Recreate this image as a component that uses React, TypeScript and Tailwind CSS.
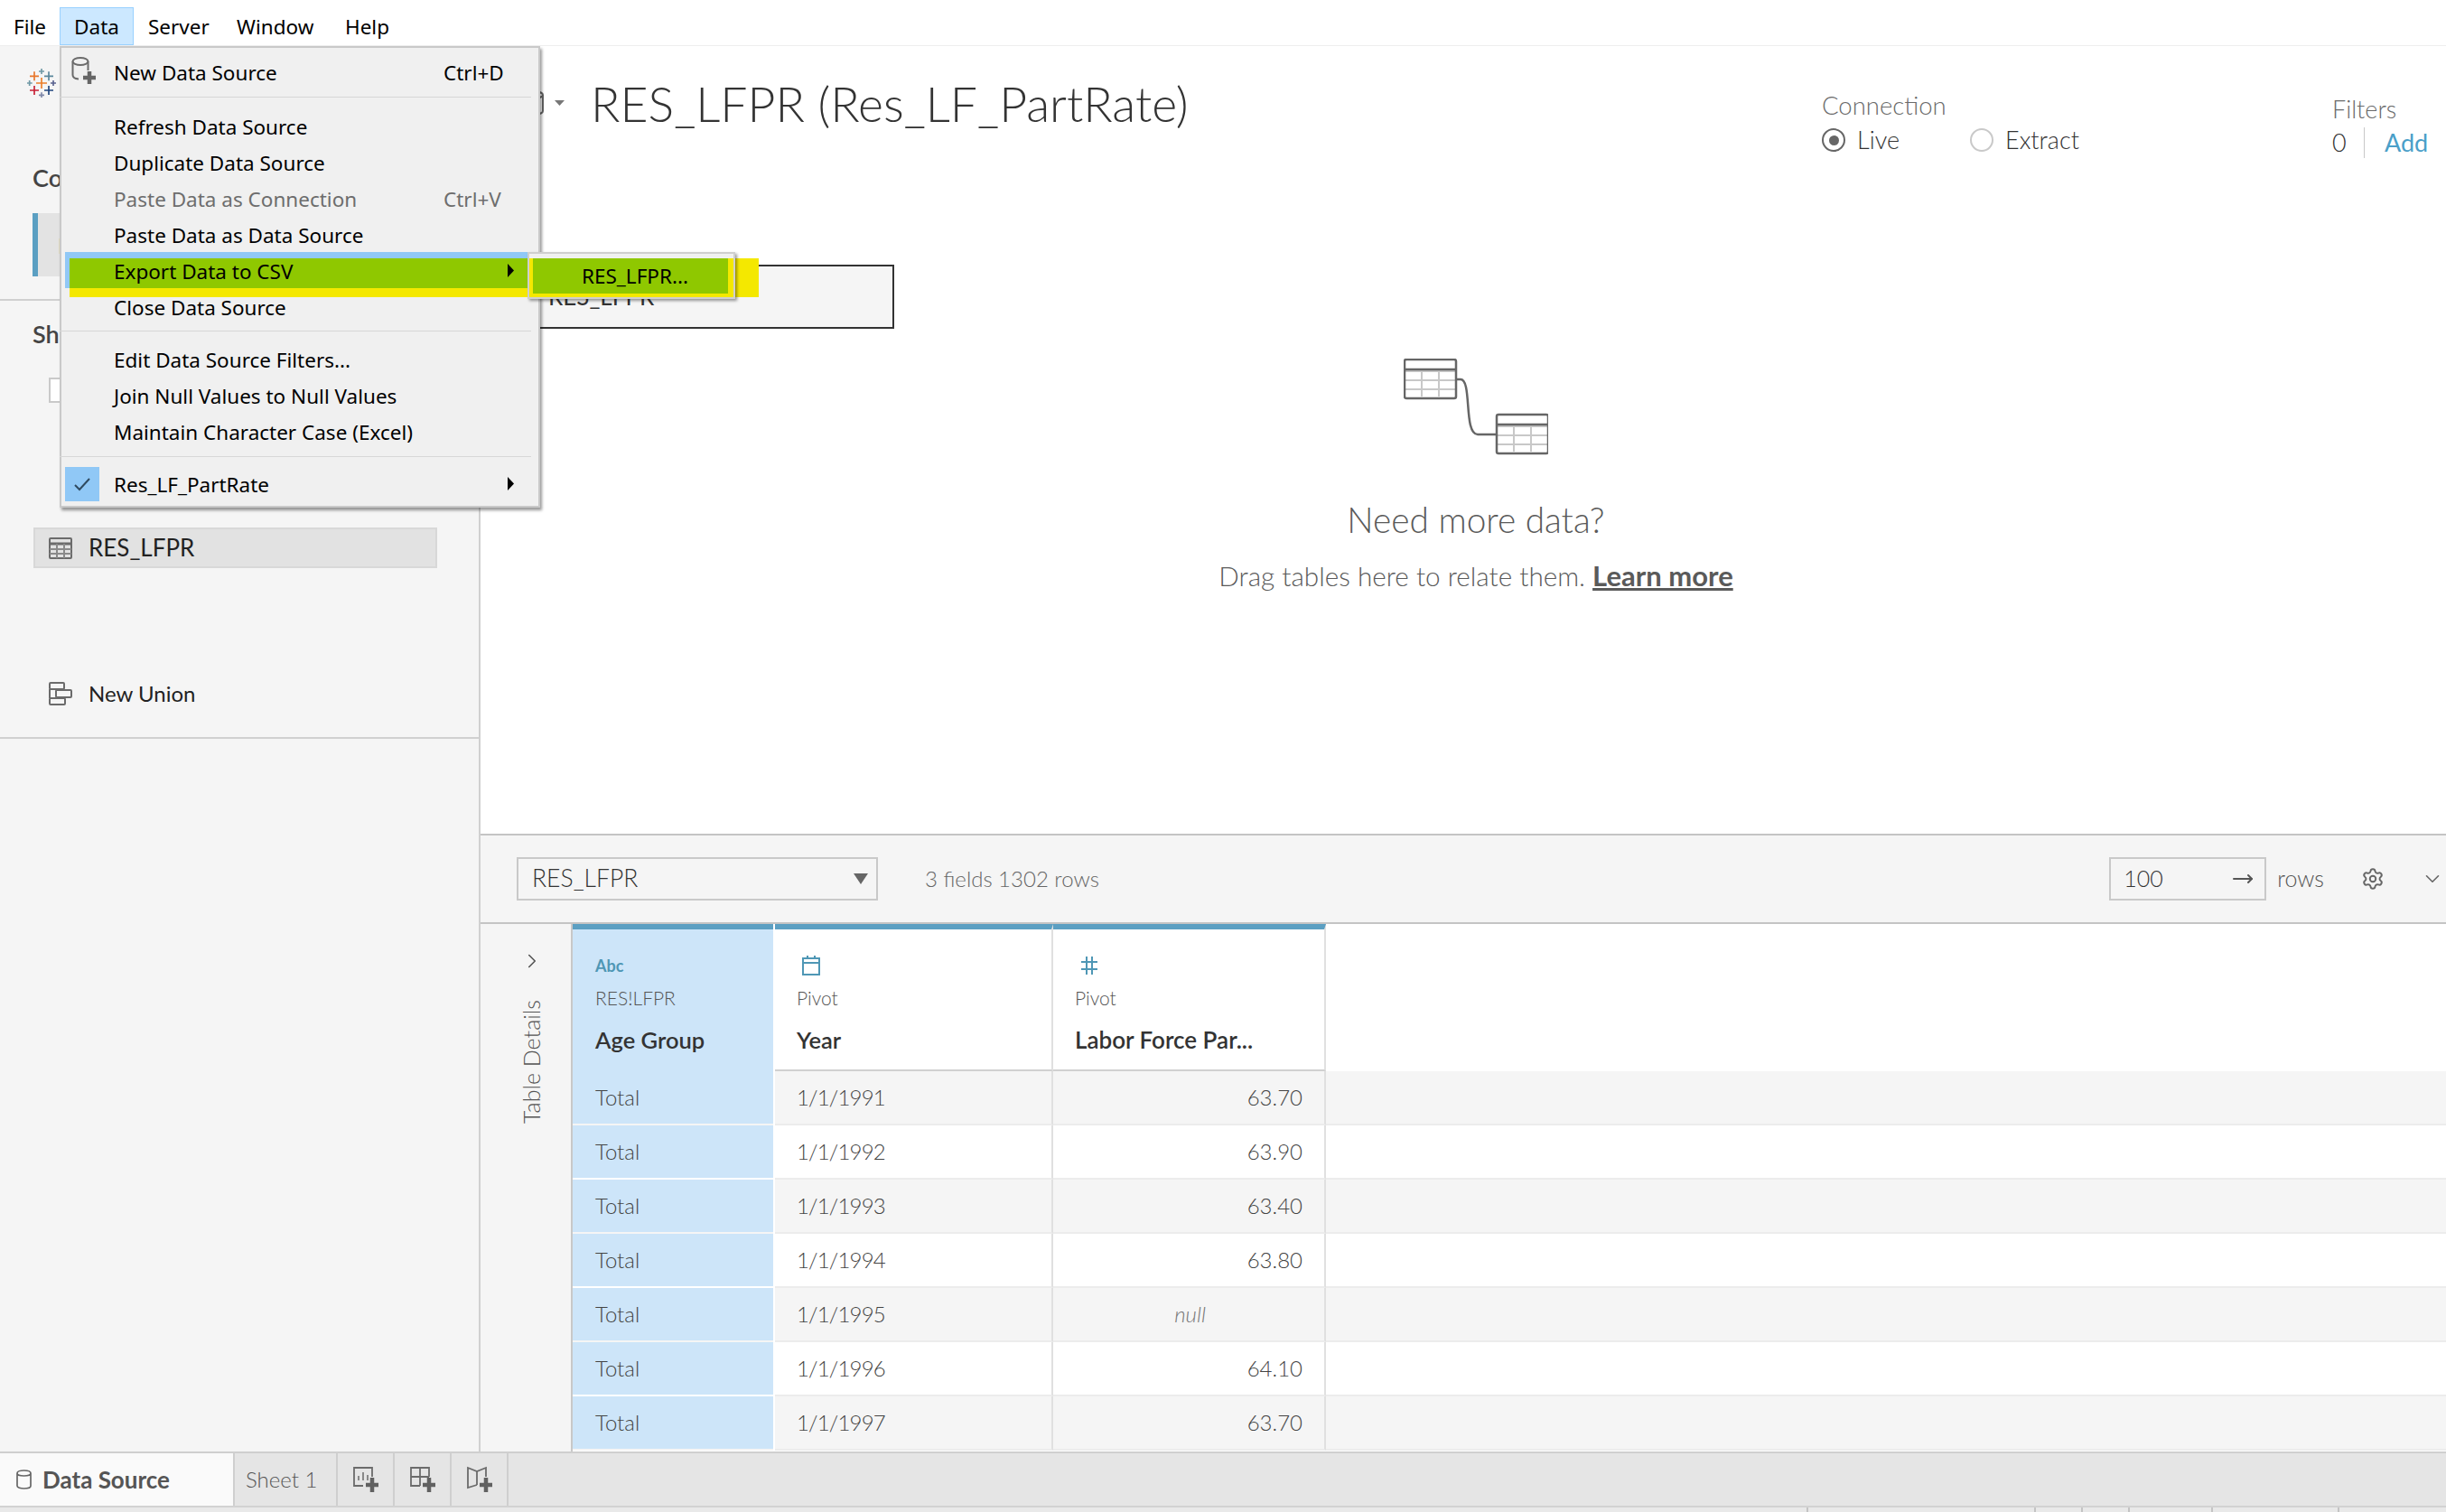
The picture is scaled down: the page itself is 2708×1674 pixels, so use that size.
import React from 'react';
import { ChevronRight, ChevronDown, Settings, MoveRight } from 'lucide-react';

const logoCrosses = [
  { x: 54, y: 87, s: 15, w: 5, c: '#e8762b' },
  { x: 78, y: 71, s: 9, w: 5, c: '#7099a6' },
  { x: 102, y: 87, s: 15, w: 5, c: '#5b879b' },
  { x: 38, y: 110, s: 9, w: 5, c: '#7099a6' },
  { x: 78, y: 110, s: 18, w: 5, c: '#eb7f2b' },
  { x: 117, y: 110, s: 9, w: 5, c: '#59628f' },
  { x: 54, y: 134, s: 15, w: 5, c: '#c72035' },
  { x: 102, y: 134, s: 15, w: 5, c: '#1f447e' },
  { x: 78, y: 150, s: 9, w: 5, c: '#7e87a8' },
];

const TableauLogo = () => (
  <svg width="32" height="32" viewBox="30 62 96 96">
    {logoCrosses.map((p, i) => (
      <path key={i} d={`M${p.x - p.s} ${p.y}H${p.x + p.s}M${p.x} ${p.y - p.s}V${p.y + p.s}`} stroke={p.c} strokeWidth={p.w} fill="none" />
    ))}
  </svg>
);

const Arrow = () => (
  <svg width="9" height="15" viewBox="0 0 9 15" className="absolute left-[495px] top-[11px]">
    <path d="M1 0L8 7.5L1 15Z" fill="#000" />
  </svg>
);

const MenuRow = ({ label, shortcut, disabled, sub, children }: { label: string; shortcut?: string; disabled?: boolean; sub?: boolean; children?: React.ReactNode }) => (
  <div className={`relative flex items-center h-[40px] pl-[60px] ${disabled ? 'text-[#6d6d6d]' : 'text-black'}`}>
    {children}
    <span>{label}</span>
    {shortcut && <span className="absolute left-[425px]">{shortcut}</span>}
    {sub && <Arrow />}
  </div>
);

const DataMenu = () => (
  <div className="absolute left-[66px] top-[51px] z-20 w-[532px] h-[511px] bg-[#f0f0f0] border-2 border-[#c9c9c9] shadow-[2px_3px_3px_rgba(0,0,0,0.4)] pt-[8px] text-[22.5px] font-['Noto_Sans',sans-serif] [&>*]:-ml-[2px]">
    <div className="absolute left-[6px] top-[226px] w-[512px] h-[40px] bg-[#90c8f6]" />
    <div className="absolute left-[11px] top-[233px] w-[507px] h-[33px] bg-[#8fc800]" />
    <div className="absolute left-[11px] top-[266px] w-[507px] h-[10px] bg-[#f4e800]" />
    <MenuRow label="New Data Source" shortcut="Ctrl+D">
      <svg width="28" height="34" viewBox="0 0 28 34" className="absolute left-[13px] top-[1px]">
        <ellipse cx="10" cy="6" rx="8.5" ry="4" fill="none" stroke="#6b6b6b" strokeWidth="2" />
        <path d="M1.5 6V21Q1.5 25 8 25.5M18.5 6V16" fill="none" stroke="#6b6b6b" strokeWidth="2" />
        <path d="M20 17V31M13 24H27" stroke="#666" strokeWidth="4.5" />
      </svg>
    </MenuRow>
    <div className="h-[1px] bg-[#d7d7d7] mt-[6px] mb-[13px] ml-[52px] mr-[8px]" />
    <MenuRow label="Refresh Data Source" />
    <MenuRow label="Duplicate Data Source" />
    <MenuRow label="Paste Data as Connection" shortcut="Ctrl+V" disabled />
    <MenuRow label="Paste Data as Data Source" />
    <MenuRow label="Export Data to CSV" sub />
    <MenuRow label="Close Data Source" />
    <div className="h-[1px] bg-[#d7d7d7] mt-[5px] mb-[12px] ml-[52px] mr-[8px]" />
    <MenuRow label="Edit Data Source Filters..." />
    <MenuRow label="Join Null Values to Null Values" />
    <MenuRow label="Maintain Character Case (Excel)" />
    <div className="h-[1px] bg-[#d7d7d7] mt-[6px] mb-[11px] ml-[52px] mr-[8px]" />
    <MenuRow label="Res_LF_PartRate" sub>
      <div className="absolute left-[6px] top-[0px] w-[38px] h-[38px] bg-[#90c8f6] flex items-center justify-center">
        <svg width="22" height="18" viewBox="0 0 22 18"><path d="M3 10L8 15L19 3" fill="none" stroke="#2f4a60" strokeWidth="2" /></svg>
      </div>
    </MenuRow>
  </div>
);

const ExportSubmenu = () => (
  <>
    <div className="absolute left-[598px] top-[286px] z-10 w-[242px] h-[43px] bg-[#f4e800]" />
    <div className="absolute left-[584px] top-[279px] z-30 w-[230px] h-[52px] bg-[#f0f0f0] border-2 border-[#cfcfcf] shadow-[2px_2px_3px_rgba(0,0,0,0.4)]">
      <div className="h-[5px]" />
      <div className="h-[43px] bg-[#f4e800]">
        <div className="ml-[4px] mr-[6px] h-[39px] bg-[#8fc800] flex items-center pl-[54px] text-[22.5px] text-black font-['Noto_Sans',sans-serif]">RES_LFPR...</div>
      </div>
    </div>
  </>
);

const GridIcon = () => (
  <svg width="26" height="24" viewBox="0 0 26 24">
    <rect x="1" y="1" width="24" height="22" rx="1" fill="none" stroke="#6b6b6b" strokeWidth="2" />
    <path d="M1 7H25" stroke="#6b6b6b" strokeWidth="3" />
    <path d="M1 13H25M1 18H25M9 7V23M17 7V23" stroke="#8a8a8a" strokeWidth="2" />
  </svg>
);

const UnionIcon = () => (
  <svg width="26" height="26" viewBox="0 0 26 26">
    <g fill="none" stroke="#6b6b6b" strokeWidth="2">
      <rect x="1" y="1" width="16" height="7" rx="1" />
      <rect x="8" y="9" width="17" height="8" rx="1" />
      <rect x="1" y="18" width="17" height="7" rx="1" />
      <path d="M1 8V18" />
    </g>
  </svg>
);

const Sidebar = () => (
  <div className="w-[532px] h-full shrink-0 bg-[#f5f5f5] border-r-2 border-[#d0d0d0] flex flex-col">
    <div className="ml-[30px] mt-[25px]"><TableauLogo /></div>
    <div className="ml-[36px] mt-[72px] h-[34px] leading-[34px] text-[27px] font-semibold text-[#444]">Connections</div>
    <div className="ml-[36px] mt-[22px] w-[448px] h-[70px] bg-[#e3e3e3] border-l-[6px] border-[#5b9fc2] pl-[22px] pt-[18px] text-[24px] text-[#333]">Res_LF_PartRate</div>
    <div className="h-[2px] bg-[#d0d0d0] mt-[25px]" />
    <div className="ml-[36px] mt-[20px] h-[34px] leading-[34px] text-[27px] font-semibold text-[#444]">Sheets</div>
    <div className="ml-[54px] mt-[31px] w-[28px] h-[28px] border-2 border-[#c9c9c9] bg-white" />
    <div className="ml-[37px] mt-[138px] w-[447px] h-[45px] bg-[#e2e2e2] border-2 border-[#d8d8d8] flex items-center pl-[15px] gap-[18px]">
      <GridIcon />
      <span className="text-[26px] text-[#222]">RES_LFPR</span>
    </div>
    <div className="ml-[54px] mt-[126px] flex items-center gap-[18px] h-[26px]">
      <UnionIcon />
      <span className="text-[24px] text-[#222]">New Union</span>
    </div>
    <div className="h-[2px] bg-[#d0d0d0] mt-[35px]" />
  </div>
);

const MiniTable = () => (
  <g>
    <path d="M2 14H57M2 24H57M2 34H57M20 14V42M39 14V42" stroke="#c8c8c8" strokeWidth="2" />
    <rect x="1" y="1" width="57" height="43" rx="2" fill="none" stroke="#666" strokeWidth="2.5" />
    <path d="M1 12H58" stroke="#666" strokeWidth="2.5" />
  </g>
);

const Canvas = () => (
  <div className="h-[872px] bg-white flex flex-col shrink-0">
    <div className="flex h-[120px]">
      <div className="pl-[48px] pt-[33px] h-[93px] flex items-center text-[53.5px] leading-[60px] font-light text-[#333] whitespace-nowrap">
        <svg width="22" height="30" viewBox="0 0 22 30">
          <path d="M1 6C1 1 21 1 21 6V24C21 29 1 29 1 24ZM1 6C1 11 21 11 21 6" fill="none" stroke="#666" strokeWidth="2" />
        </svg>
        <svg width="11" height="6" viewBox="0 0 11 6" className="ml-[12px]"><path d="M0 0H11L5.5 6Z" fill="#777" /></svg>
        <span className="ml-[29px]">RES_LFPR (Res_LF_PartRate)</span>
      </div>
      <div className="ml-auto w-[565px] pt-[52px]">
        <div className="text-[27.5px] leading-[28px] text-[#6a6a6a] font-light">Connection</div>
        <div className="flex items-center mt-[10px] h-[28px] text-[27px] font-light text-[#333]">
          <div className="w-[26px] h-[26px] rounded-full border-2 border-[#666] flex items-center justify-center"><div className="w-[11px] h-[11px] rounded-full bg-[#666]" /></div>
          <span className="ml-[13px] w-[125px]">Live</span>
          <div className="w-[26px] h-[26px] rounded-full border-2 border-[#c9c9c9]" />
          <span className="ml-[13px]">Extract</span>
        </div>
      </div>
      <div className="w-[126px] pt-[56px]">
        <div className="text-[27px] leading-[28px] text-[#6a6a6a] font-light">Filters</div>
        <div className="flex items-center mt-[6px] h-[34px] text-[27px] text-[#333]">
          <span className="w-[35px] font-light">0</span>
          <div className="w-[1px] h-[34px] bg-[#c9c9c9]" />
          <span className="ml-[22px] text-[#4a9fc9]">Add</span>
        </div>
      </div>
    </div>
    <div className="ml-[60px] mt-[122px] w-[398px] h-[71px] bg-[#f5f5f5] border-y-2 border-r-2 border-[#333] pl-[15px] pt-[17px] text-[26px] leading-[32px] text-[#333]">RES_LFPR</div>
    <div className="ml-[602px] mt-[33px] w-[1000px] flex flex-col items-center">
      <svg width="160" height="107" viewBox="0 0 160 107">
        <MiniTable />
        <g transform="translate(102 61)"><MiniTable /></g>
        <path d="M58 23H63C76 23 66 84 82 84H102" fill="none" stroke="#666" strokeWidth="2.5" />
      </svg>
      <div className="mt-[49px] text-[38.8px] leading-[44px] font-light text-[#5a5a5a]">Need more data?</div>
      <div className="mt-[22px] text-[29.7px] leading-[36px] font-light text-[#5a5a5a]">Drag tables here to relate them. <span className="font-bold underline text-[31px]">Learn more</span></div>
    </div>
  </div>
);

const Toolbar = () => (
  <div className="h-[100px] shrink-0 bg-[#f5f5f5] border-y-2 border-[#c4c4c4] flex items-center pl-[40px] pr-[2px]">
    <div className="w-[400px] h-[48px] border-2 border-[#c9c9c9] flex items-center pl-[15px] pr-[9px] text-[26.5px] font-light text-[#333]">
      <span>RES_LFPR</span>
      <svg width="16" height="14" viewBox="0 0 16 14" className="ml-auto"><path d="M0 1H16L8 13Z" fill="#666" /></svg>
    </div>
    <span className="ml-[52px] text-[24px] font-light text-[#666]">3 fields 1302 rows</span>
    <div className="ml-auto w-[174px] h-[48px] border-2 border-[#c9c9c9] flex items-center pl-[14px] pr-[12px] text-[25px] font-light text-[#333]">
      <span>100</span>
      <MoveRight size={24} strokeWidth={2} className="ml-auto text-[#555]" />
    </div>
    <span className="ml-[12px] text-[25px] font-light text-[#555]">rows</span>
    <Settings size={26} strokeWidth={1.8} className="ml-[41px] text-[#666]" />
    <ChevronDown size={26} strokeWidth={1.5} className="ml-[40px] text-[#666]" />
  </div>
);

const years = ['1/1/1991', '1/1/1992', '1/1/1993', '1/1/1994', '1/1/1995', '1/1/1996', '1/1/1997'];
const values = ['63.70', '63.90', '63.40', '63.80', null, '64.10', '63.70'];

const DataGrid = () => (
  <div className="flex-1 flex min-h-0">
    <div className="w-[102px] shrink-0 bg-[#f5f5f5] border-r-2 border-[#c8c8c8] flex flex-col items-center pt-[28px]">
      <ChevronRight size={26} strokeWidth={1.5} className="text-[#555] ml-[14px]" />
      <div className="mt-[30px] ml-[14px] [writing-mode:vertical-rl] rotate-180 text-[25px] font-light text-[#555]">Table Details</div>
    </div>
    <div className="flex-1 flex flex-col min-w-0">
      <div className="flex h-[163px] shrink-0 bg-white">
        <div className="w-[222px] bg-[#cde5f9] border-t-[6px] border-[#5b9fc2] pl-[25px] pt-[26px]">
          <div className="h-[28px] leading-[28px] text-[18px] font-bold text-[#4f97b5]">Abc</div>
          <div className="mt-[8px] text-[21px] leading-[28px] font-light text-[#555]">RES!LFPR</div>
          <div className="mt-[18px] text-[25.5px] leading-[28px] font-semibold text-[#333]">Age Group</div>
        </div>
        <div className="w-[2px] bg-white" />
        <div className="w-[308px] border-t-[6px] border-[#5b9fc2] border-r-2 border-r-[#e0e0e0] border-b-2 border-b-[#d0d0d0] pl-[24px] pt-[26px]">
          <svg width="22" height="28" viewBox="0 0 22 28" className="ml-[5px]">
            <path d="M2 6H20V24H2ZM2 11H20M7 3V7M15 3V7" fill="none" stroke="#4f97b5" strokeWidth="2" />
          </svg>
          <div className="mt-[8px] text-[21px] leading-[28px] font-light text-[#555]">Pivot</div>
          <div className="mt-[18px] text-[25.5px] leading-[28px] font-semibold text-[#333]">Year</div>
        </div>
        <div className="w-[302px] border-t-[6px] border-[#5b9fc2] border-r-2 border-r-[#e0e0e0] border-b-2 border-b-[#d0d0d0] pl-[24px] pt-[26px]">
          <svg width="22" height="28" viewBox="0 0 22 28" className="ml-[5px]">
            <path d="M2 10H20M2 18H20M8 4V24M14 4V24" fill="none" stroke="#4f97b5" strokeWidth="2" />
          </svg>
          <div className="mt-[8px] text-[21px] leading-[28px] font-light text-[#555]">Pivot</div>
          <div className="mt-[18px] text-[26px] leading-[28px] font-semibold text-[#333]">Labor Force Par...</div>
        </div>
      </div>
      {years.map((y, i) => (
        <div key={y} className={`flex h-[60px] shrink-0 text-[24px] font-light text-[#444] ${i % 2 === 0 ? 'bg-[#f5f5f5]' : 'bg-white'}`}>
          <div className="w-[222px] h-[58px] bg-[#cde5f9] flex items-center pl-[25px]">Total</div>
          <div className="w-[2px] bg-white" />
          <div className="w-[308px] border-r-2 border-b-2 border-r-[#e0e0e0] border-b-[#ececec] flex items-center pl-[24px] tracking-[-0.8px]">{y}</div>
          <div className="w-[302px] border-r-2 border-b-2 border-r-[#e0e0e0] border-b-[#ececec] flex items-center justify-end pr-[24px]">
            {values[i] ?? <span className="italic text-[#777] mr-[107px]">null</span>}
          </div>
          <div className="flex-1 border-b-2 border-[#ececec]" />
        </div>
      ))}
    </div>
  </div>
);

const TabIcon = ({ kind }: { kind: 'sheet' | 'dash' | 'story' }) => (
  <svg width="30" height="30" viewBox="0 0 30 30">
    <g fill="none" stroke="#6b6b6b" strokeWidth="1.8">
      {kind === 'sheet' && <><path d="M12 22H2V2H22V12" /><path d="M7 16V11M12 16V7M17 16V10" strokeWidth="1.5" /></>}
      {kind === 'dash' && <path d="M12 22H2V2H22V12M2 12H22M12 2V22" />}
      {kind === 'story' && <path d="M12 21L2 24V2L12 6L22 2V12M12 6V21M2 2" />}
    </g>
    <path d="M22 13V29M15 21H29" stroke="#616161" strokeWidth="4.5" />
  </svg>
);

const TabBar = () => (
  <div className="h-[60px] shrink-0 bg-[#e5e5e5] border-t-2 border-[#cfcfcf] flex">
    <div className="w-[260px] bg-[#fafafa] border-r-2 border-[#cfcfcf] flex items-center pl-[18px] gap-[12px]">
      <svg width="17" height="24" viewBox="0 0 17 24">
        <path d="M1 5C1 1 16 1 16 5V19C16 23 1 23 1 19ZM1 5C1 9 16 9 16 5" fill="none" stroke="#666" strokeWidth="1.7" />
      </svg>
      <span className="text-[26px] font-bold text-[#555]">Data Source</span>
    </div>
    <div className="w-[114px] border-r-2 border-[#cfcfcf] flex items-center pl-[12px] text-[24px] font-light text-[#555]">Sheet 1</div>
    {(['sheet', 'dash', 'story'] as const).map(k => (
      <div key={k} className="w-[63px] border-r-2 border-[#cfcfcf] flex items-center justify-center"><TabIcon kind={k} /></div>
    ))}
  </div>
);

const statusTicks = ['w-[2002px]', 'w-[252px]', 'w-[52px]', 'w-[52px]', 'w-[92px]', 'w-[140px]'];

const StatusBar = () => (
  <div className="h-[7px] shrink-0 bg-[#e9e9e9] border-t-2 border-[#d2d2d2] flex">
    {statusTicks.map((w, i) => (
      <div key={i} className={`${w} h-full border-r-2 border-[#c4c4c4]`} />
    ))}
  </div>
);

export default function App() {
  return (
    <div className="relative w-[2708px] h-[1674px] overflow-hidden bg-white flex flex-col font-['Lato',sans-serif]">
      <div className="h-[51px] shrink-0 bg-white border-b border-[#eeeeee] flex items-end text-[22.5px] text-black font-['Noto_Sans',sans-serif]">
        <div className="h-[42px] ml-[15px] w-[51px] flex items-center pt-[2px]">File</div>
        <div className="h-[42px] w-[82px] bg-[#cce8ff] border border-[#99d1ff] flex items-center justify-center pt-[2px]">Data</div>
        <div className="h-[42px] ml-[16px] w-[98px] flex items-center pt-[2px]">Server</div>
        <div className="h-[42px] w-[120px] flex items-center pt-[2px]">Window</div>
        <div className="h-[42px] flex items-center pt-[2px]">Help</div>
      </div>
      <div className="flex-1 flex min-h-0">
        <Sidebar />
        <div className="flex-1 flex flex-col min-w-0">
          <Canvas />
          <Toolbar />
          <DataGrid />
        </div>
      </div>
      <TabBar />
      <StatusBar />
      <DataMenu />
      <ExportSubmenu />
    </div>
  );
}
